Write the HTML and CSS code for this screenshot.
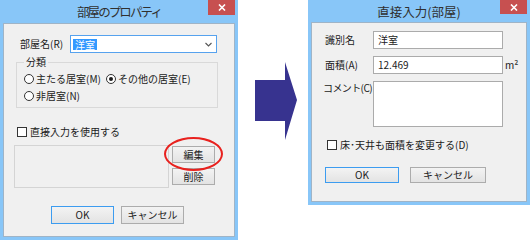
FILE: index.html
```html
<!DOCTYPE html>
<html lang="ja">
<head>
	<meta charset="UTF-8">
	<link rel="stylesheet" href="styles.css">
	<title>部屋のプロパティ</title>
</head>
<body>
	<div class="scene">
		<div class="window win-props">
			<div class="titlebar">
				<span class="title">部屋のプロパティ</span>
				<span class="close"><svg width="8" height="7" viewBox="0 0 8 7"><path d="M1 0.5L7 6.5M7 0.5L1 6.5" stroke="#fff" stroke-width="1.6"/></svg></span>
			</div>
			<div class="client">
				<div class="name-row">
					<span class="lbl">部屋名(R)</span>
					<div class="combo">
						<span class="sel">洋室</span>
						<svg class="chev" width="7" height="5" viewBox="0 0 7 5"><path d="M0.5 1L3.5 4L6.5 1" fill="none" stroke="#555" stroke-width="1.1"/></svg>
					</div>
				</div>
				<fieldset class="group">
					<legend>分類</legend>
					<div class="radios">
						<span class="radio"><i class="dot"></i>主たる居室(M)</span>
						<span class="radio"><i class="dot on"></i>その他の居室(E)</span>
						<span class="radio"><i class="dot"></i>非居室(N)</span>
					</div>
				</fieldset>
				<div class="check-row direct">
					<i class="box"></i>直接入力を使用する
				</div>
				<div class="edit-row">
					<div class="panel"></div>
					<div class="side-btns">
						<span class="btn small">編集</span>
						<span class="btn small">削除</span>
						<span class="mark"></span>
					</div>
				</div>
				<div class="btn-row props-btns">
					<span class="btn default">OK</span>
					<span class="btn">キャンセル</span>
				</div>
			</div>
		</div>

		<svg class="arrow" width="42" height="78" viewBox="0 0 42 78">
			<polygon points="0,18 30,18 30,0 42,38 30,78 30,59 0,59" fill="#37338f"/>
		</svg>

		<div class="window win-direct">
			<div class="titlebar">
				<span class="title">直接入力(部屋)</span>
				<span class="close"><svg width="8" height="7" viewBox="0 0 8 7"><path d="M1 0.5L7 6.5M7 0.5L1 6.5" stroke="#fff" stroke-width="1.6"/></svg></span>
			</div>
			<div class="client">
				<div class="form">
					<span class="lbl">識別名</span>
					<div class="field">洋室</div>
					<span></span>
					<span class="lbl">面積(A)</span>
					<div class="field">12.469</div>
					<span class="unit">m²</span>
					<span class="lbl top">コメント(C)</span>
					<div class="field memo"></div>
					<span></span>
				</div>
				<div class="check-row floor">
					<i class="box"></i>床･天井も面積を変更する(D)
				</div>
				<div class="btn-row direct-btns">
					<span class="btn default wide">OK</span>
					<span class="btn wide2">キャンセル</span>
				</div>
			</div>
		</div>
	</div>
</body>
</html>
```

FILE: styles.css
```css
html, body {
	margin: 0;
	padding: 0;
	background: #fff;
	font-family: "Noto Sans CJK JP", "Liberation Sans", sans-serif;
	font-size: 10px;
	line-height: 12px;
	color: #1b1b1b;
}
.scene {
	display: flex;
	width: 530px;
	height: 241px;
}
.window {
	display: flex;
	flex-direction: column;
	background: #88c6f8;
	padding: 0 3px 3px 3px;
	box-sizing: border-box;
}
.win-props {
	width: 238px;
	height: 240px;
}
.win-direct {
	width: 222px;
	height: 205px;
	margin-left: 11px;
}
.titlebar {
	position: relative;
	display: flex;
	justify-content: center;
	align-items: center;
	height: 23px;
}
.win-direct .titlebar {
	height: 22px;
}
.title {
	font-size: 12.5px;
	color: #303030;
	padding-top: 1px;
}
.win-props .title {
	letter-spacing: -1.9px;
}
.close {
	position: absolute;
	top: 0;
	right: 0;
	width: 27px;
	height: 15px;
	background: #c75050;
	display: flex;
	align-items: center;
	justify-content: center;
}
.win-direct .close {
	height: 14px;
}
.client {
	flex: 1;
	background: #f0f0f0;
	border: 1px solid #9fb4c7;
}

/* left dialog */
.name-row {
	display: flex;
	align-items: center;
	margin: 11px 0 0 16px;
	height: 18px;
}
.name-row .lbl {
	width: 50px;
}
.combo {
	display: flex;
	align-items: center;
	justify-content: space-between;
	width: 147px;
	height: 18px;
	box-sizing: border-box;
	border: 1px solid #56a2ee;
	background: #fff;
	padding: 0 4px 0 2px;
}
.sel {
	background: #3399ff;
	color: #fff;
	padding: 0 2px;
	line-height: 11px;
}
.group {
	margin: 3px 0 0 12px;
	padding: 0 4px 5px 7px;
	width: 202px;
	box-sizing: border-box;
	border: 1px solid #d9d9d9;
}
.group legend {
	padding: 0 2px;
	line-height: 12px;
}
.radios {
	display: grid;
	grid-template-columns: 82px auto;
	row-gap: 5px;
	padding-top: 5px;
}
.radio {
	display: flex;
	align-items: center;
	height: 12px;
	white-space: nowrap;
}
.dot {
	width: 10px;
	height: 10px;
	box-sizing: border-box;
	border: 1px solid #333;
	border-radius: 50%;
	background: #fff;
	margin-right: 2px;
	display: flex;
	align-items: center;
	justify-content: center;
}
.dot.on::after {
	content: "";
	width: 4px;
	height: 4px;
	border-radius: 50%;
	background: #1b1b1b;
}
.check-row {
	display: flex;
	align-items: center;
	height: 12px;
	white-space: nowrap;
}
.box {
	width: 10px;
	height: 10px;
	box-sizing: border-box;
	border: 1px solid #333;
	background: #fff;
	margin-right: 3px;
}
.direct {
	margin: 18px 0 0 13px;
}
.edit-row {
	display: flex;
	margin: 7px 0 0 10px;
	height: 43px;
}
.panel {
	width: 155px;
	height: 43px;
	box-sizing: border-box;
	border: 1px solid #d4d4d4;
}
.side-btns {
	position: relative;
	display: flex;
	flex-direction: column;
	gap: 5px;
	margin: 1px 0 0 3px;
}
.btn {
	display: flex;
	align-items: center;
	justify-content: center;
	box-sizing: border-box;
	border: 1px solid #acacac;
	background: linear-gradient(#f3f3f3, #e3e3e3);
	width: 63px;
	height: 18px;
}
.btn.small {
	width: 43px;
	height: 17px;
}
.btn.default {
	border-color: #3c9cf0;
}
.mark {
	position: absolute;
	left: -8px;
	top: -9px;
	width: 59px;
	height: 34px;
	box-sizing: border-box;
	border: 2px solid #e8211e;
	border-radius: 50%;
}
.btn-row {
	display: flex;
}
.props-btns {
	margin: 18px 0 0 47px;
	gap: 7px;
}

.arrow {
	margin: 62px 0 0 17px;
}

/* right dialog */
.form {
	display: grid;
	grid-template-columns: 48px 130px auto;
	grid-template-rows: 18px 18px 46px;
	row-gap: 7px;
	align-items: center;
	margin: 8px 0 0 13px;
}
.form .lbl {
	white-space: nowrap;
}
.form .top {
	align-self: start;
	padding-top: 1px;
	margin-left: -2px;
	letter-spacing: -0.6px;
}
.field {
	height: 18px;
	box-sizing: border-box;
	border: 1px solid #ababab;
	background: #fff;
	padding: 0 4px;
	display: flex;
	align-items: center;
}
.memo {
	height: 46px;
}
.unit {
	padding-left: 2px;
}
.floor {
	margin: 12px 0 0 15px;
}
.direct-btns {
	margin: 16px 0 0 13px;
	gap: 11px;
}
.btn.wide {
	width: 74px;
	height: 16px;
}
.btn.wide2 {
	width: 76px;
	height: 16px;
}
```
